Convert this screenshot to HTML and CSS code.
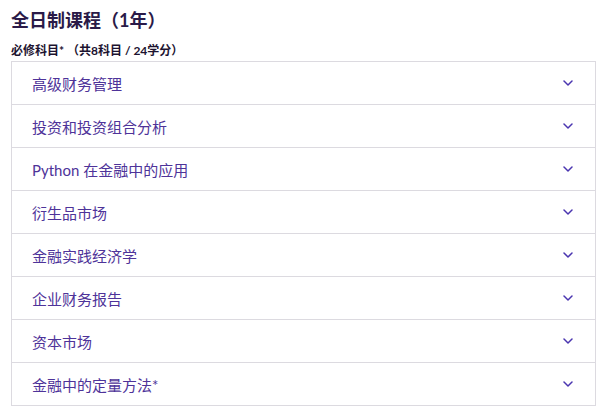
FILE: index.html
```html
<!DOCTYPE html>
<html lang="zh-CN">
<head>
  <meta charset="UTF-8" />
  <meta name="viewport" content="width=device-width, initial-scale=1.0" />
  <title>全日制课程</title>
  <link rel="stylesheet" href="styles.css">
</head>
<body>
  <h2 class="title">全日制课程（1年）</h2>
  <p class="subtitle">必修科目* （共8科目 / 24学分）</p>

  <ul class="courses">
    <li class="course"><span>高级财务管理</span><svg class="chev" viewBox="0 0 10 6"><path d="M1 1l4 4 4-4"/></svg></li>
    <li class="course"><span>投资和投资组合分析</span><svg class="chev" viewBox="0 0 10 6"><path d="M1 1l4 4 4-4"/></svg></li>
    <li class="course"><span>Python 在金融中的应用</span><svg class="chev" viewBox="0 0 10 6"><path d="M1 1l4 4 4-4"/></svg></li>
    <li class="course"><span>衍生品市场</span><svg class="chev" viewBox="0 0 10 6"><path d="M1 1l4 4 4-4"/></svg></li>
    <li class="course"><span>金融实践经济学</span><svg class="chev" viewBox="0 0 10 6"><path d="M1 1l4 4 4-4"/></svg></li>
    <li class="course"><span>企业财务报告</span><svg class="chev" viewBox="0 0 10 6"><path d="M1 1l4 4 4-4"/></svg></li>
    <li class="course"><span>资本市场</span><svg class="chev" viewBox="0 0 10 6"><path d="M1 1l4 4 4-4"/></svg></li>
    <li class="course"><span>金融中的定量方法*</span><svg class="chev" viewBox="0 0 10 6"><path d="M1 1l4 4 4-4"/></svg></li>
  </ul>
</body>
</html>
```

FILE: styles.css
```css
body {
  margin: 0;
  padding: 6px 12px 0 11px;
  font-family: Lato, "Noto Sans CJK SC", sans-serif;
  background: #fff;
}

.title {
  margin: 0;
  font-size: 18px;
  line-height: 28px;
  font-weight: 700;
  color: #2a1a48;
}

.subtitle {
  margin: 9px 0 2px;
  font-size: 12px;
  line-height: 16px;
  font-weight: 700;
  color: #1c1330;
}

.courses {
  list-style: none;
  margin: 0;
  padding: 0;
  border: 1px solid #dcdae0;
}

.course {
  display: flex;
  justify-content: space-between;
  align-items: center;
  height: 42px;
  padding: 0 22px 0 20px;
  border-bottom: 1px solid #dcdae0;
  font-size: 15px;
  color: #4e3399;
}

.course:last-child {
  border-bottom: none;
}

.chev {
  width: 10px;
  height: 6px;
  fill: none;
  stroke: #4a35b0;
  stroke-width: 1.5;
  stroke-linecap: round;
  stroke-linejoin: round;
}
```
